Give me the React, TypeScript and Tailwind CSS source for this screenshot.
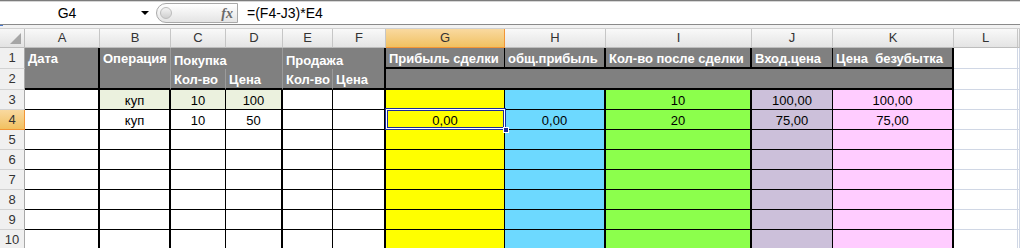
import React from 'react';

const cols = [
  { id: 'A', rb: 'border-r-2 border-r-black', bb: 'border-b border-b-black', bg: 'bg-white', bg3: 'bg-white' },
  { id: 'B', rb: 'border-r-2 border-r-black', bb: 'border-b border-b-black', bg: 'bg-white', bg3: 'bg-[#ebf1de]' },
  { id: 'C', rb: 'border-r border-r-black', bb: 'border-b border-b-black', bg: 'bg-white', bg3: 'bg-[#ebf1de]' },
  { id: 'D', rb: 'border-r-2 border-r-black', bb: 'border-b border-b-black', bg: 'bg-white', bg3: 'bg-[#ebf1de]' },
  { id: 'E', rb: 'border-r border-r-black', bb: 'border-b border-b-black', bg: 'bg-white', bg3: 'bg-white' },
  { id: 'F', rb: 'border-r-2 border-r-black', bb: 'border-b border-b-black', bg: 'bg-white', bg3: 'bg-white' },
  { id: 'G', rb: 'border-r border-r-black', bb: 'border-b border-b-black', bg: 'bg-[#ffff00]', bg3: 'bg-[#ffff00]' },
  { id: 'H', rb: 'border-r-2 border-r-black', bb: 'border-b border-b-black', bg: 'bg-[#6dd9ff]', bg3: 'bg-[#6dd9ff]' },
  { id: 'I', rb: 'border-r-2 border-r-black', bb: 'border-b border-b-black', bg: 'bg-[#8cff4c]', bg3: 'bg-[#8cff4c]' },
  { id: 'J', rb: 'border-r border-r-black', bb: 'border-b border-b-black', bg: 'bg-[#ccc0da]', bg3: 'bg-[#ccc0da]' },
  { id: 'K', rb: 'border-r-2 border-r-black', bb: 'border-b border-b-black', bg: 'bg-[#ffccff]', bg3: 'bg-[#ffccff]' },
  { id: 'L', rb: 'border-r border-r-[#d0d7e5]', bb: 'border-b border-b-[#d0d7e5]', bg: 'bg-white', bg3: 'bg-white' },
  { id: 'M', rb: 'border-r border-r-[#d0d7e5]', bb: 'border-b border-b-[#d0d7e5]', bg: 'bg-white', bg3: 'bg-white' },
];

const values: Record<number, Record<string, string>> = {
  3: { B: 'куп', C: '10', D: '100', I: '10', J: '100,00', K: '100,00' },
  4: { B: 'куп', C: '10', D: '50', G: '0,00', H: '0,00', I: '20', J: '75,00', K: '75,00' },
};

const bodyRows = [3, 4, 5, 6, 7, 8, 9, 10];

const gray = 'bg-[#808080] text-white font-bold flex items-end pl-[3px] leading-[16px] whitespace-pre overflow-hidden';

function RowHead({ n }: { n: number }) {
  const active = n === 4;
  return (
    <div
      className={
        active
          ? 'flex items-center justify-center bg-linear-to-b from-[#f9d99f] to-[#f1c15f] border-b border-r border-[#f29536] text-[#333]'
          : 'flex items-center justify-center bg-[#f0f0f0] border-b border-b-[#d2d2d2] border-r border-r-[#a8a8a8] text-[#333]'
      }
    >
      {n}
    </div>
  );
}

export default function App() {
  return (
    <div className="w-[1020px] h-[248px] overflow-hidden bg-white font-['Liberation_Sans',Arial,sans-serif] text-[13px] text-black">
      {/* formula bar */}
      <div className="h-[29px] flex flex-col">
        <div className="h-px bg-[#7c7c7c]" />
        <div className="h-px bg-[#d6d6d6]" />
        <div className="h-[22px] flex items-center">
          <div className="w-[134px] text-center text-[14px]">G4</div>
          <div className="w-[22px] flex justify-center">
            <div className="w-0 h-0 border-l-[4px] border-r-[4px] border-t-[4px] border-l-transparent border-r-transparent border-t-black" />
          </div>
          <div className="w-[82px] h-[20px] rounded-l-full border border-[#a9a9a9] bg-linear-to-b from-white to-[#e4e4e4] flex items-center justify-between pl-[3px] pr-[4px]">
            <div className="w-[12px] h-[12px] rounded-full border border-[#bcbcbc] bg-linear-to-b from-[#f4f4f4] to-[#cfcfcf]" />
            <span className="font-['Liberation_Serif',serif] italic font-bold text-[14px] text-[#6a6a6a]">fx</span>
          </div>
          <div className="pl-[9px] text-[14px]">=(F4-J3)*E4</div>
        </div>
        <div className="h-px bg-[#8a8a8a]" />
        <div className="h-[4px] bg-[#f2f2f2] border-b border-[#d0d0d0] relative">
          <div className="absolute left-0 top-0 w-[3px] h-px bg-[#4a7bd0]" />
        </div>
      </div>

      {/* sheet */}
      <div className="grid grid-cols-[25px_75px_71px_55px_57px_50px_53px_119px_101px_146px_81px_121px_64px_1fr] grid-rows-[19px_21px_21px_repeat(8,20px)]">
        {/* column headers */}
        <div className="relative bg-linear-to-b from-[#f7f7f7] to-[#e3e3e3] border-r border-b border-[#bdbdbd]">
          <svg className="absolute right-[3px] bottom-[3px]" width="11" height="11" viewBox="0 0 11 11">
            <polygon points="11,0 11,11 0,11" fill="#a6a6a6" />
          </svg>
        </div>
        {cols.map((c) =>
          c.id === 'G' ? (
            <div key={c.id} className="flex items-center justify-center bg-linear-to-b from-[#f9d99f] to-[#f1c15f] border-r border-b border-[#f29536] text-[#333]">
              {c.id}
            </div>
          ) : (
            <div key={c.id} className="flex items-center justify-center bg-linear-to-b from-[#f9f9f9] to-[#e4e4e4] border-r border-r-[#c6c6c6] border-b border-b-[#bdbdbd] text-[#333]">
              {c.id === 'M' ? '' : c.id}
            </div>
          )
        )}

        {/* row 1 */}
        <RowHead n={1} />
        <div className={`${gray} row-span-2 items-start pt-[3px] border-r-2 border-r-black border-b-2 border-b-black`}>Дата</div>
        <div className={`${gray} row-span-2 items-start pt-[3px] border-r border-r-[#9b9b9b] border-b-2 border-b-black`}>Операция</div>
        <div className={`${gray} col-span-2 border-r border-r-[#9b9b9b]`}>Покупка</div>
        <div className={`${gray} col-span-2 border-r-2 border-r-black`}>Продажа</div>
        <div className={`${gray} border-r border-r-black border-b-2 border-b-black`}>Прибыль сделки</div>
        <div className={`${gray} border-r-2 border-r-black border-b-2 border-b-black`}>общ.прибыль</div>
        <div className={`${gray} border-r-2 border-r-black border-b-2 border-b-black`}>Кол-во после сделки</div>
        <div className={`${gray} border-r border-r-black border-b-2 border-b-black`}>Вход.цена</div>
        <div className={`${gray} border-r-2 border-r-black border-b-2 border-b-black`}>Цена  безубытка</div>
        <div className="bg-white border-r border-b border-[#d0d7e5]" />
        <div className="bg-white border-r border-b border-[#d0d7e5]" />

        {/* row 2 */}
        <RowHead n={2} />
        <div className={`${gray} border-r border-r-[#9b9b9b] border-b-2 border-b-black`}>Кол-во</div>
        <div className={`${gray} border-r border-r-[#9b9b9b] border-b-2 border-b-black`}>Цена</div>
        <div className={`${gray} border-r border-r-[#9b9b9b] border-b-2 border-b-black`}>Кол-во</div>
        <div className={`${gray} border-r-2 border-r-black border-b-2 border-b-black`}>Цена</div>
        <div className={`${gray} col-span-5 border-r-2 border-r-black border-b-2 border-b-black`} />
        <div className="bg-white border-r border-b border-[#d0d7e5]" />
        <div className="bg-white border-r border-b border-[#d0d7e5]" />

        {/* data rows */}
        {bodyRows.map((r) => (
          <React.Fragment key={r}>
            <RowHead n={r} />
            {cols.map((c) => {
              const v = values[r]?.[c.id] ?? '';
              const selected = r === 4 && c.id === 'G';
              return (
                <div
                  key={c.id}
                  className={`${r === 3 ? c.bg3 : c.bg} ${c.rb} ${c.bb} ${selected ? 'relative' : ''} flex items-end justify-center leading-[16px]`}
                >
                  {v}
                  {selected && (
                    <>
                      <div className="absolute left-[-1px] top-[-2px] right-[-2px] bottom-[-1px] border border-[#1b2b9c] shadow-[inset_0_0_0_1px_#ffffff,inset_0_0_0_2px_#1b2b9c] z-10 pointer-events-none" />
                      <div className="absolute right-[-5px] bottom-[-4px] w-[6px] h-[6px] bg-[#1b2b9c] border border-white z-20" />
                    </>
                  )}
                </div>
              );
            })}
          </React.Fragment>
        ))}
      </div>
    </div>
  );
}
